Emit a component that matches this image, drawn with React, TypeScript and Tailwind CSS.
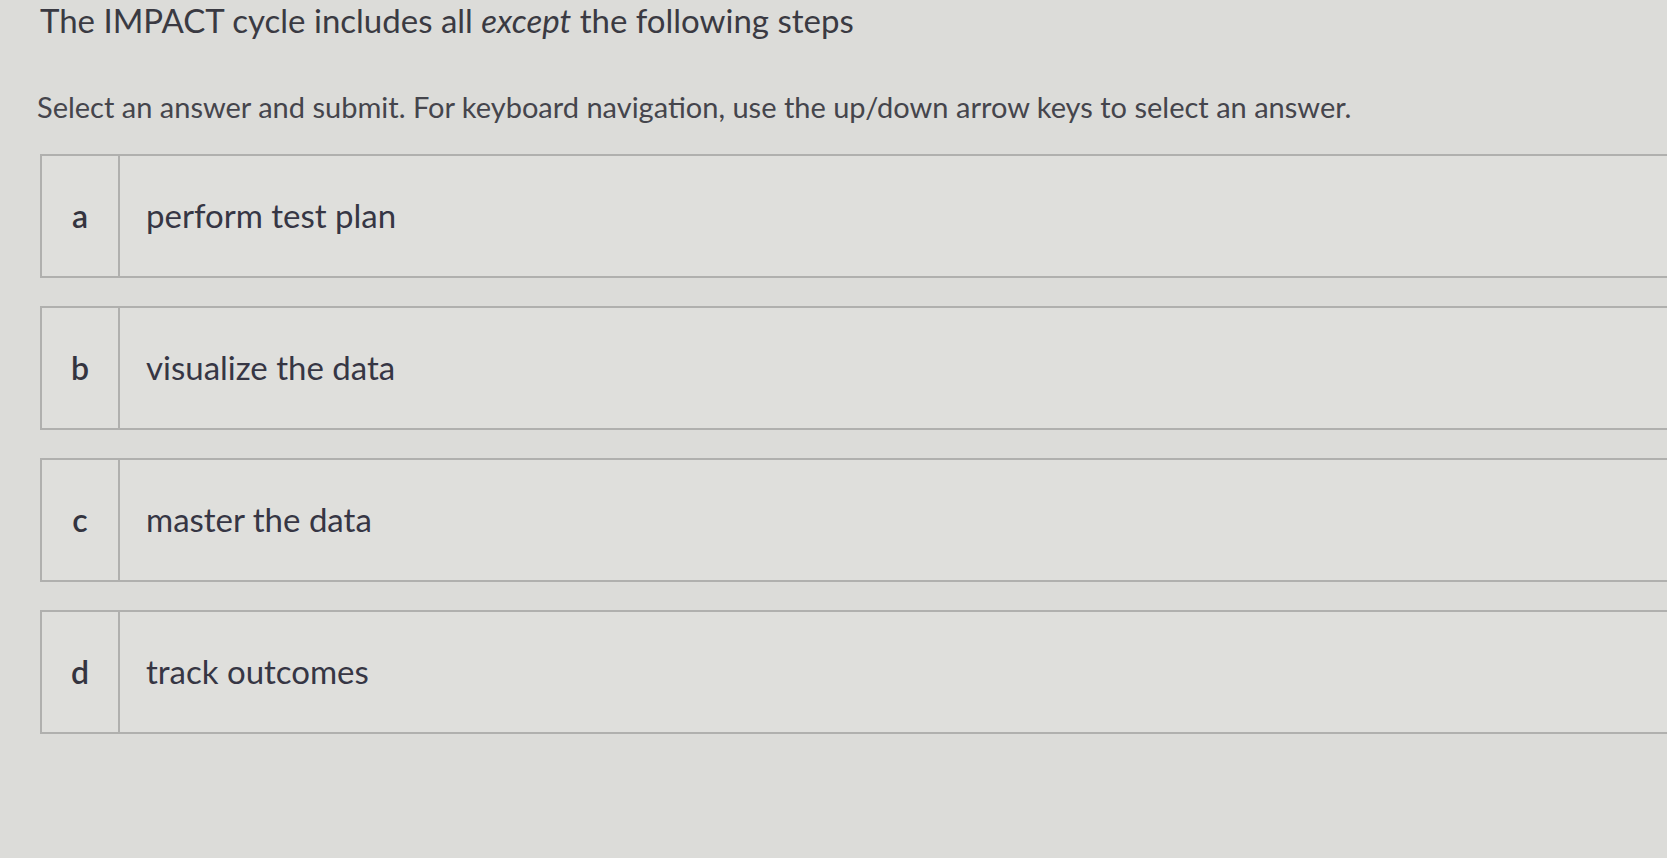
const options = [
  { key: 'a', text: 'perform test plan' },
  { key: 'b', text: 'visualize the data' },
  { key: 'c', text: 'master the data' },
  { key: 'd', text: 'track outcomes' },
]

export default function App() {
  return (
    <div className="min-h-[858px] w-full overflow-hidden bg-[#dcdcd9] font-['Lato',sans-serif]">
      <div className="pl-[40px]">
        <h1 className="pt-[2px] text-[33px] leading-[36px] text-[#3a3a42]">
          The IMPACT cycle includes all <em>except</em> the following steps
        </h1>
        <p className="mt-[53px] -ml-[3px] text-[29px] leading-[32px] text-[#45454c]">
          Select an answer and submit. For keyboard navigation, use the up/down arrow keys to select an answer.
        </p>
      </div>

      <div className="mt-[31px] flex flex-col gap-[28px] pl-[40px]">
        {options.map((o) => (
          <div
            key={o.key}
            className="flex h-[124px] w-[1700px] border-2 border-[#b0b0ae] bg-[#dfdfdc]"
          >
            <div className="flex w-[78px] items-center justify-center border-r-2 border-[#b0b0ae] text-[32px] font-semibold text-[#34343f]">
              {o.key}
            </div>
            <div className="flex items-center pl-[26px] text-[33px] text-[#363644]">
              {o.text}
            </div>
          </div>
        ))}
      </div>
    </div>
  )
}
